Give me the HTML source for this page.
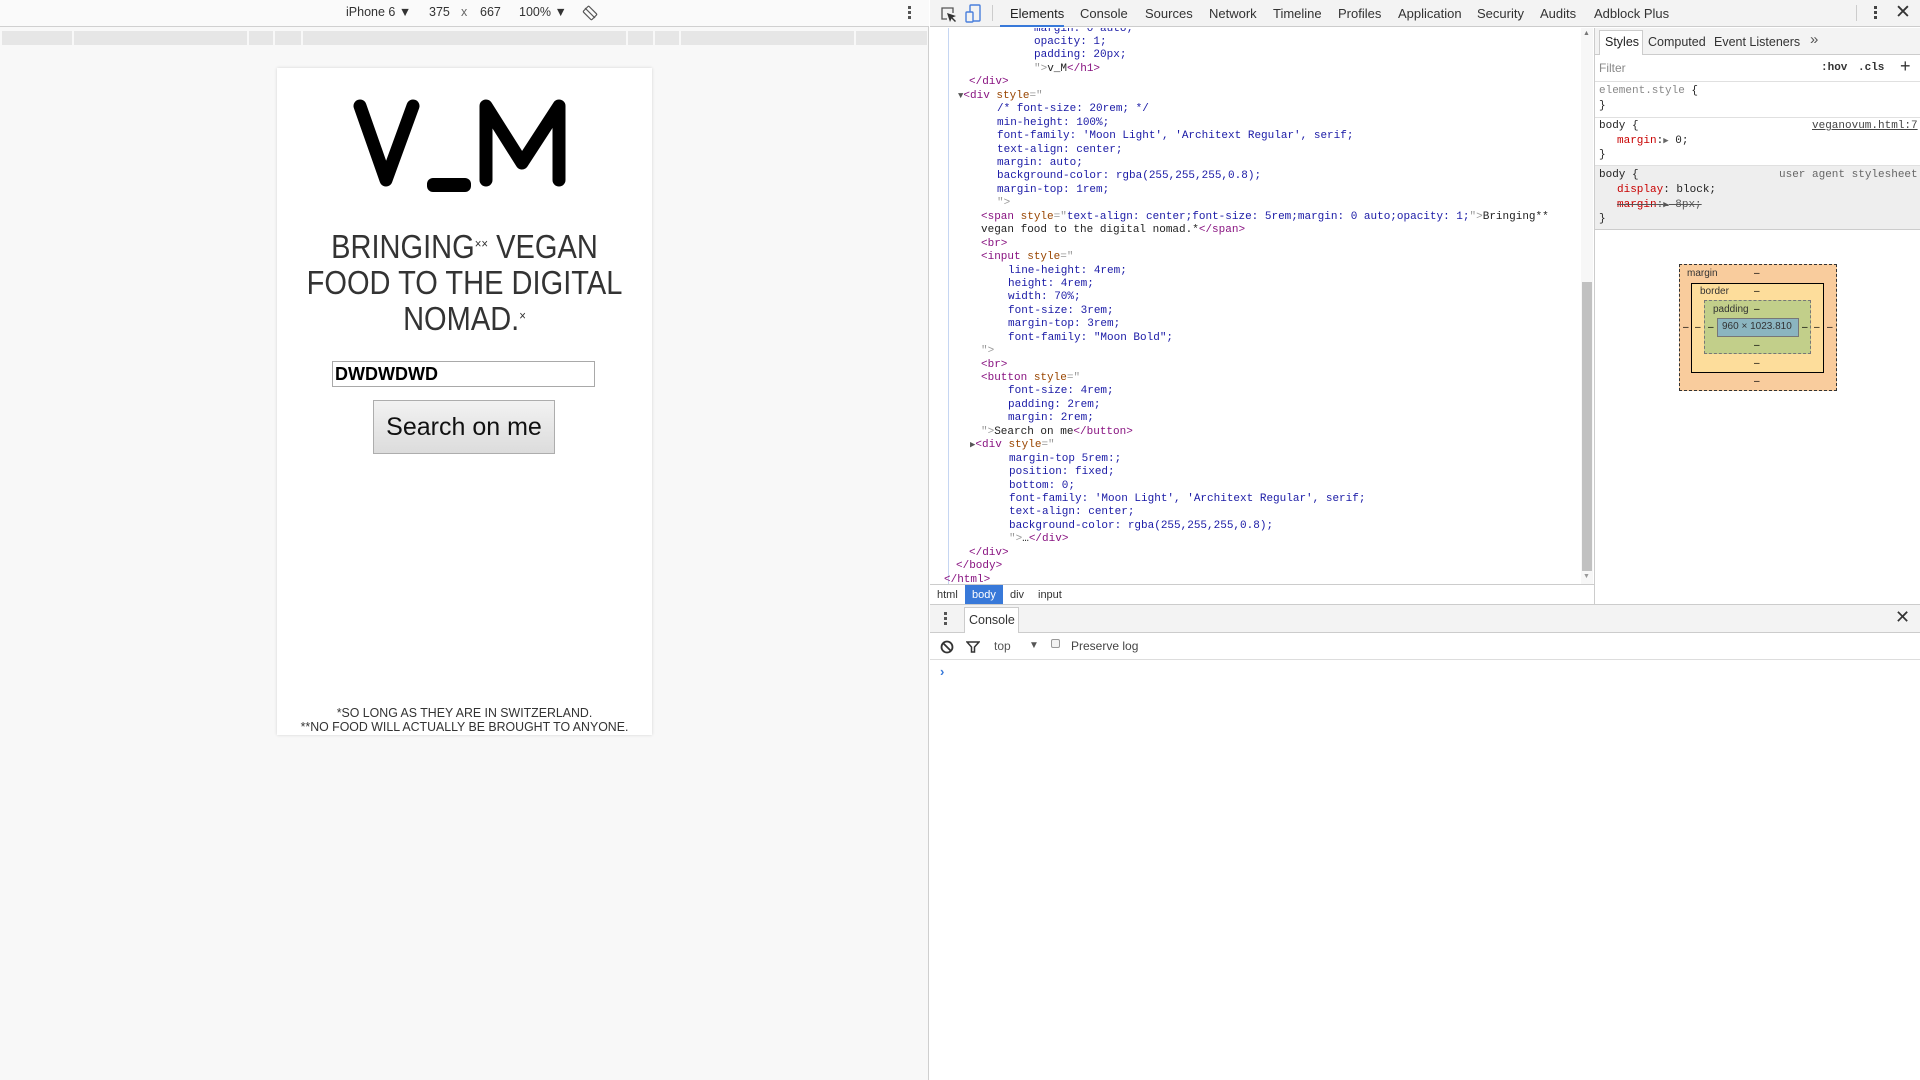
<!DOCTYPE html>
<html><head><meta charset="utf-8"><style>
*{box-sizing:border-box;margin:0;padding:0}
body{width:1920px;height:1080px;overflow:hidden;background:#fff;font-family:"Liberation Sans",sans-serif;position:relative}
.a{position:absolute;white-space:nowrap}
#left{position:absolute;left:0;top:0;width:929px;height:1080px;background:#f8f8f8;border-right:1px solid #cfcfcf}
.tb{font-size:12.5px;color:#333;top:5px}
.seg{position:absolute;top:31px;height:14px;background:#e6e6e6}
#phone{position:absolute;left:277px;top:68px;width:375px;height:667px;background:#fff;box-shadow:0 0 3px rgba(0,0,0,.15)}
.code{font-family:"Liberation Mono",monospace;font-size:11px;line-height:13.44px;height:13.44px}
.p{color:#1a1aa6}.t{color:#881280}.n{color:#994500}.g{color:#999}.x{color:#222}
.tab{font-size:13px;color:#333;top:6px}
.st{font-family:"Liberation Mono",monospace;font-size:11px;color:#222}
.r{color:#c80000}
.sp{display:inline-block;font-size:13px;line-height:0;vertical-align:top;position:relative;top:15px}
</style></head><body>
<div id="left">
 <div class="a" style="left:0;top:0;width:929px;height:27px;border-bottom:1px solid #d0d0d0;background:#fafafa"></div>
 <div class="a tb" style="left:346px">iPhone 6 ▼</div>
 <div class="a tb" style="left:429px">375</div>
 <div class="a tb" style="left:461px;color:#666">x</div>
 <div class="a tb" style="left:480px">667</div>
 <div class="a tb" style="left:519px">100% ▼</div>
 <svg class="a" style="left:582px;top:5px" width="16" height="16" viewBox="0 0 16 16"><g fill="none" stroke="#555" stroke-width="1.2"><rect x="4" y="2" width="8" height="12" rx="1" transform="rotate(-45 8 8)"/><line x1="3" y1="3" x2="13" y2="13"/></g></svg>
 <div class="a" style="left:908px;top:6px;width:3px;height:3px;background:#555;box-shadow:0 5px #555,0 10px #555"></div>
 <div class="seg" style="left:2px;width:70px"></div><div class="seg" style="left:74px;width:173px"></div><div class="seg" style="left:249px;width:24px"></div><div class="seg" style="left:275px;width:26px"></div><div class="seg" style="left:303px;width:323px"></div><div class="seg" style="left:628px;width:25px"></div><div class="seg" style="left:655px;width:24px"></div><div class="seg" style="left:681px;width:173px"></div><div class="seg" style="left:856px;width:71px"></div>
 <div id="phone">
  <svg class="a" style="left:-277px;top:-68px" width="929" height="300"><g stroke="#000" stroke-width="13" stroke-linecap="round" stroke-linejoin="round" fill="none"><polyline points="360,106 386,180 413,106"/><polyline points="486,180 486,106 522,163 559,106 559,180"/></g><rect x="427" y="178" width="44" height="14" rx="6" fill="#000"/></svg>
  <div class="a" style="left:0;width:375px;top:161px;text-align:center;font-size:33px;line-height:36px;color:#333;transform:scaleX(.88)">BRINGING<span class="sp">××</span> VEGAN<br>FOOD TO THE DIGITAL<br>NOMAD.<span class="sp">×</span></div>
  <div class="a" style="left:55px;top:293px;width:263px;height:26px;border:1px solid #a9a9a9;font-weight:bold;font-size:18px;line-height:24px;padding-left:2px;color:#000">DWDWDWD</div>
  <div class="a" style="left:96px;top:332px;width:182px;height:54px;border:1px solid #adadad;background:linear-gradient(#f2f2f2,#dcdcdc);font-size:25px;line-height:52px;text-align:center;color:#111">Search on me</div>
  <div class="a" style="left:0;width:375px;top:638px;text-align:center;font-size:13px;line-height:14px;color:#333;transform:scaleX(.95)">*SO LONG AS THEY ARE IN SWITZERLAND.<br>**NO FOOD WILL ACTUALLY BE BROUGHT TO ANYONE.</div>
 </div>
</div>
<!-- devtools top -->
<div class="a" style="left:930px;top:0;width:990px;height:27px;background:#f3f3f3;border-bottom:1px solid #ccc"></div>
<svg class="a" style="left:939px;top:5px" width="18" height="18" viewBox="0 0 18 18"><path d="M8 14H3V3h11v5" fill="none" stroke="#555" stroke-width="1.3"/><path d="M8 8l3 9 1.5-3.5 3.5 3.5 1-1-3.5-3.5 3.5-1.5z" fill="#333"/></svg>
<svg class="a" style="left:965px;top:4px" width="18" height="20" viewBox="0 0 18 20"><rect x="5" y="1" width="10" height="16" rx="1" fill="none" stroke="#4a7fdc" stroke-width="1.4"/><rect x="1" y="8" width="7" height="10" rx="1" fill="#f3f3f3" stroke="#4a7fdc" stroke-width="1.4"/></svg>
<div class="a" style="left:992px;top:5px;width:1px;height:16px;background:#ccc"></div>
<div class="a tab" style="left:1010px;color:#222">Elements</div>
<div class="a" style="left:1000px;top:25px;width:64px;height:2px;background:#3879d9"></div>
<div class="a tab" style="left:1080px">Console</div><div class="a tab" style="left:1145px">Sources</div><div class="a tab" style="left:1209px">Network</div><div class="a tab" style="left:1273px">Timeline</div><div class="a tab" style="left:1338px">Profiles</div><div class="a tab" style="left:1398px">Application</div><div class="a tab" style="left:1477px">Security</div><div class="a tab" style="left:1540px">Audits</div><div class="a tab" style="left:1594px">Adblock Plus</div>
<div class="a" style="left:1856px;top:5px;width:1px;height:16px;background:#ccc"></div>
<div class="a" style="left:1874px;top:6px;width:3px;height:3px;background:#444;box-shadow:0 5px #444,0 10px #444"></div>
<div class="a" style="left:1895px;top:1px;font-size:19px;color:#333">✕</div>
<!-- elements -->
<div class="a" style="left:948px;top:28px;width:1px;height:556px;background:#c6d6f2"></div>
<div class="a" style="left:0;top:28px;width:1580px;height:556px;overflow:hidden">
<div class="a" style="left:0;top:-5px">
<div class="a code p" style="left:1034px;top:-0.5px;color:#1a1aa6">margin: 0 auto;</div>
<div class="a code p" style="left:1034px;top:13px">opacity: 1;</div>
<div class="a code p" style="left:1034px;top:26.4px">padding: 20px;</div>
<div class="a code" style="left:1034px;top:39.9px"><span class="g">"&gt;</span><span class="x">v_M</span><span class="t">&lt;/h1&gt;</span></div>
<div class="a code t" style="left:969px;top:53.3px">&lt;/div&gt;</div>
<div class="a code" style="left:958px;top:66.8px"><span style="color:#555;font-size:9px">▼</span><span class="t">&lt;div</span> <span class="n">style</span><span class="g">="</span></div>
<div class="a code p" style="left:997px;top:80.2px">/* font-size: 20rem; */</div>
<div class="a code p" style="left:997px;top:93.6px">min-height: 100%;</div>
<div class="a code p" style="left:997px;top:107.1px">font-family: 'Moon Light', 'Architext Regular', serif;</div>
<div class="a code p" style="left:997px;top:120.5px">text-align: center;</div>
<div class="a code p" style="left:997px;top:134px">margin: auto;</div>
<div class="a code p" style="left:997px;top:147.4px">background-color: rgba(255,255,255,0.8);</div>
<div class="a code p" style="left:997px;top:160.8px">margin-top: 1rem;</div>
<div class="a code g" style="left:997px;top:174.3px">"&gt;</div>
<div class="a code" style="left:981px;top:187.7px"><span class="t">&lt;span</span> <span class="n">style</span><span class="g">="</span><span class="p">text-align: center;font-size: 5rem;margin: 0 auto;opacity: 1;</span><span class="g">"&gt;</span><span class="x">Bringing**</span></div>
<div class="a code" style="left:981px;top:201.2px"><span class="x">vegan food to the digital nomad.*</span><span class="t">&lt;/span&gt;</span></div>
<div class="a code t" style="left:981px;top:214.6px">&lt;br&gt;</div>
<div class="a code" style="left:981px;top:228px"><span class="t">&lt;input</span> <span class="n">style</span><span class="g">="</span></div>
<div class="a code p" style="left:1008px;top:241.5px">line-height: 4rem;</div>
<div class="a code p" style="left:1008px;top:254.9px">height: 4rem;</div>
<div class="a code p" style="left:1008px;top:268.4px">width: 70%;</div>
<div class="a code p" style="left:1008px;top:281.8px">font-size: 3rem;</div>
<div class="a code p" style="left:1008px;top:295.2px">margin-top: 3rem;</div>
<div class="a code p" style="left:1008px;top:308.7px">font-family: "Moon Bold";</div>
<div class="a code g" style="left:981px;top:322.1px">"&gt;</div>
<div class="a code t" style="left:981px;top:335.6px">&lt;br&gt;</div>
<div class="a code" style="left:981px;top:349px"><span class="t">&lt;button</span> <span class="n">style</span><span class="g">="</span></div>
<div class="a code p" style="left:1008px;top:362.4px">font-size: 4rem;</div>
<div class="a code p" style="left:1008px;top:375.9px">padding: 2rem;</div>
<div class="a code p" style="left:1008px;top:389.3px">margin: 2rem;</div>
<div class="a code" style="left:981px;top:402.8px"><span class="g">"&gt;</span><span class="x">Search on me</span><span class="t">&lt;/button&gt;</span></div>
<div class="a code" style="left:970px;top:416.2px"><span style="color:#555;font-size:9px">▶</span><span class="t">&lt;div</span> <span class="n">style</span><span class="g">="</span></div>
<div class="a code p" style="left:1009px;top:429.6px">margin-top 5rem:;</div>
<div class="a code p" style="left:1009px;top:443.1px">position: fixed;</div>
<div class="a code p" style="left:1009px;top:456.5px">bottom: 0;</div>
<div class="a code p" style="left:1009px;top:470px">font-family: 'Moon Light', 'Architext Regular', serif;</div>
<div class="a code p" style="left:1009px;top:483.4px">text-align: center;</div>
<div class="a code p" style="left:1009px;top:496.8px">background-color: rgba(255,255,255,0.8);</div>
<div class="a code" style="left:1009px;top:510.3px"><span class="g">"&gt;</span><span class="x">…</span><span class="t">&lt;/div&gt;</span></div>
<div class="a code t" style="left:969px;top:523.7px">&lt;/div&gt;</div>
<div class="a code t" style="left:956px;top:537.2px">&lt;/body&gt;</div>
<div class="a code t" style="left:944px;top:550.6px">&lt;/html&gt;</div>
</div>
</div>
<div class="a" style="left:1581px;top:28px;width:12px;height:556px;background:#f7f7f7"></div>
<div class="a" style="left:1582px;top:282px;width:10px;height:289px;background:#c1c1c1"></div>
<div class="a" style="left:1583px;top:30px;font-size:7px;color:#777">▲</div>
<div class="a" style="left:1583px;top:573px;font-size:7px;color:#999">▼</div>
<!-- breadcrumb -->
<div class="a" style="left:930px;top:584px;width:665px;height:21px;border-top:1px solid #ccc;background:#fff"></div>
<div class="a" style="left:937px;top:589px;font-size:11px;color:#333">html</div>
<div class="a" style="left:965px;top:585px;width:38px;height:20px;background:#3879d9"></div>
<div class="a" style="left:972px;top:589px;font-size:11px;color:#fff">body</div>
<div class="a" style="left:1010px;top:589px;font-size:11px;color:#333">div</div>
<div class="a" style="left:1038px;top:589px;font-size:11px;color:#333">input</div>
<!-- styles pane -->
<div class="a" style="left:1594px;top:28px;width:1px;height:577px;background:#ccc"></div>
<div class="a" style="left:1595px;top:28px;width:325px;height:27px;background:#f3f3f3;border-bottom:1px solid #ccc"></div>
<div class="a" style="left:1599px;top:30px;width:44px;height:25px;background:#fff;border:1px solid #ccc;border-bottom:none"></div>
<div class="a" style="left:1605px;top:35px;font-size:12.5px;color:#222">Styles</div>
<div class="a" style="left:1648px;top:35px;font-size:12.5px;color:#333">Computed</div>
<div class="a" style="left:1714px;top:35px;font-size:12.5px;color:#333">Event Listeners</div>
<div class="a" style="left:1810px;top:31px;font-size:15px;color:#555">»</div>
<div class="a" style="left:1599px;top:61px;font-size:12px;color:#888">Filter</div>
<div class="a" style="left:1821px;top:62px;font-size:11px;font-weight:bold;font-family:'Liberation Mono',monospace;color:#333">:hov</div>
<div class="a" style="left:1858px;top:62px;font-size:11px;font-weight:bold;font-family:'Liberation Mono',monospace;color:#333">.cls</div>
<div class="a" style="left:1900px;top:56px;font-size:18px;color:#333">+</div>
<div class="a" style="left:1595px;top:81px;width:325px;height:1px;background:#e0e0e0"></div>
<div class="a st" style="left:1599px;top:85px"><span style="color:#888">element.style</span> {</div>
<div class="a st" style="left:1599px;top:100px">}</div>
<div class="a" style="left:1595px;top:117px;width:325px;height:1px;background:#e0e0e0"></div>
<div class="a st" style="left:1599px;top:120px">body {</div>
<div class="a st" style="left:1812px;top:120px;color:#444;text-decoration:underline">veganovum.html:7</div>
<div class="a st" style="left:1617px;top:135px"><span class="r">margin</span>:<span style="color:#666;font-size:9px">▶</span> 0;</div>
<div class="a st" style="left:1599px;top:149px">}</div>
<div class="a" style="left:1595px;top:165px;width:325px;height:65px;background:#eee;border-top:1px solid #e0e0e0;border-bottom:1px solid #ccc"></div>
<div class="a st" style="left:1599px;top:169px">body {</div>
<div class="a st" style="left:1779px;top:169px;color:#666">user agent stylesheet</div>
<div class="a st" style="left:1617px;top:184px"><span class="r">display</span>: block;</div>
<div class="a st" style="left:1617px;top:199px;text-decoration:line-through;color:#555"><span class="r">margin</span>:<span style="font-size:9px">▶</span> 8px;</div>
<div class="a st" style="left:1599px;top:213px">}</div>
<div class="a" style="left:1679px;top:264px;width:158px;height:127px;background:#f9cc9d;border:1px dashed #333"></div>
<div class="a" style="left:1691px;top:283px;width:133px;height:90px;background:#fddd9b;border:1px solid #000"></div>
<div class="a" style="left:1704px;top:300px;width:107px;height:54px;background:#c2cf8a;border:1px dashed #777"></div>
<div class="a" style="left:1717px;top:318px;width:82px;height:19px;background:#8bb5c0;border:1px solid #777"></div>
<div class="a" style="left:1722px;top:321px;font-size:10px;color:#333">960 × 1023.810</div>
<div class="a" style="left:1687px;top:268px;font-size:10px;color:#333">margin</div>
<div class="a" style="left:1700px;top:286px;font-size:10px;color:#333">border</div>
<div class="a" style="left:1713px;top:304px;font-size:10px;color:#333">padding</div>
<div class="a" style="left:1754px;top:268px;font-size:10px">–</div><div class="a" style="left:1754px;top:286px;font-size:10px">–</div><div class="a" style="left:1754px;top:304px;font-size:10px">–</div><div class="a" style="left:1754px;top:340px;font-size:10px">–</div><div class="a" style="left:1754px;top:358px;font-size:10px">–</div><div class="a" style="left:1754px;top:376px;font-size:10px">–</div>
<div class="a" style="left:1683px;top:322px;font-size:10px">–</div><div class="a" style="left:1695px;top:322px;font-size:10px">–</div><div class="a" style="left:1708px;top:322px;font-size:10px">–</div><div class="a" style="left:1802px;top:322px;font-size:10px">–</div><div class="a" style="left:1814px;top:322px;font-size:10px">–</div><div class="a" style="left:1827px;top:322px;font-size:10px">–</div>
<!-- console drawer -->
<div class="a" style="left:930px;top:604px;width:990px;height:29px;background:#f3f3f3;border-top:1px solid #ccc;border-bottom:1px solid #ccc"></div>
<div class="a" style="left:944px;top:612px;width:3px;height:3px;background:#555;box-shadow:0 5px #555,0 10px #555"></div>
<div class="a" style="left:964px;top:607px;width:55px;height:26px;background:#fff;border:1px solid #ccc;border-bottom:none"></div>
<div class="a" style="left:969px;top:613px;font-size:12.5px;color:#333">Console</div>
<div class="a" style="left:1895px;top:607px;font-size:18px;color:#333">✕</div>
<div class="a" style="left:930px;top:659px;width:990px;height:1px;background:#ddd"></div>
<svg class="a" style="left:940px;top:640px" width="14" height="14" viewBox="0 0 14 14"><circle cx="7" cy="7" r="5.5" fill="none" stroke="#333" stroke-width="1.8"/><line x1="3" y1="3" x2="11" y2="11" stroke="#333" stroke-width="1.8"/></svg>
<svg class="a" style="left:966px;top:640px" width="14" height="14" viewBox="0 0 14 14"><path d="M1 2h12L8.5 7v5h-3V7z" fill="none" stroke="#333" stroke-width="1.5"/></svg>
<div class="a" style="left:994px;top:639px;font-size:12px;color:#555">top</div>
<div class="a" style="left:1029px;top:640px;font-size:10px;color:#555">▼</div>
<div class="a" style="left:1051px;top:639px;width:9px;height:9px;border:1px solid #999;border-radius:2px;background:#f3f3f3"></div>
<div class="a" style="left:1071px;top:639px;font-size:12px;color:#444">Preserve log</div>
<div class="a" style="left:940px;top:664px;font-size:13px;font-weight:bold;color:#3879d9">›</div>
</body></html>
